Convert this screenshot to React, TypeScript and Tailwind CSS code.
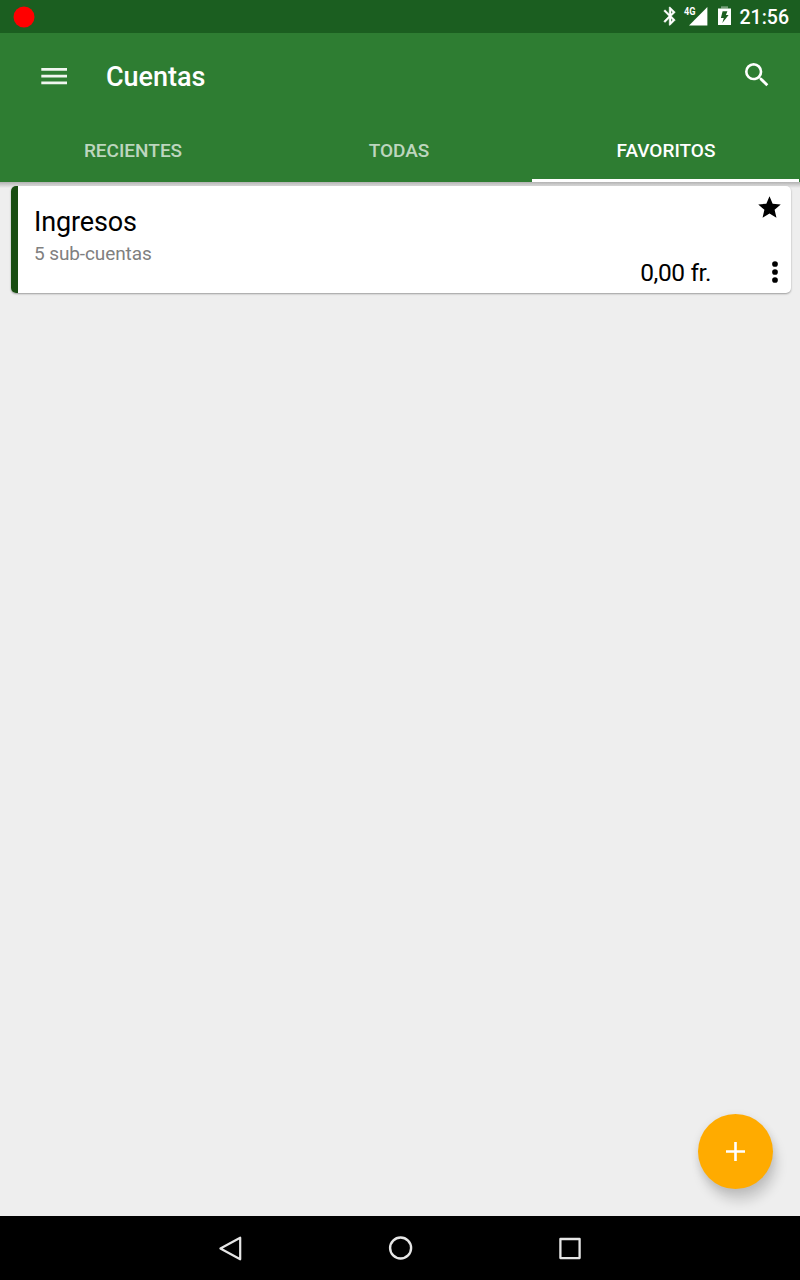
import React from 'react';

function StatusBar() {
  return (
    <div className="flex h-[33px] items-center bg-[#1b5e20] pl-[13px] pr-[11px] text-white">
      <svg className="h-[22px] w-[22px]" viewBox="0 0 22 22" aria-hidden="true">
        <circle cx="11" cy="11" r="10.5" fill="#ff0000" />
      </svg>
      <svg className="ml-auto h-[33px] w-[74px]" viewBox="660 0 74 33" fill="currentColor" aria-hidden="true">
        <path
          transform="translate(659.2 5.2) scale(0.91)"
          d="M17.71 7.71L12 2h-1v7.59L6.41 5 5 6.41 10.59 12 5 17.59 6.41 19 11 14.41V22h1l5.71-5.71-4.3-4.29 4.3-4.29zM13 5.83l1.88 1.88L13 9.59V5.83zm1.88 10.46L13 18.17v-3.76l1.88 1.88z"
          stroke="currentColor"
          strokeWidth="0.5"
        />
        <text x="684" y="15" fontFamily="Roboto, sans-serif" fontSize="10.5" fontWeight="700" textLength="11.5" lengthAdjust="spacingAndGlyphs">
          4G
        </text>
        <path d="M707.4 7v18.5H689z" />
        <path d="M721 6.3h7v2.2h-7z" opacity="0.4" />
        <path fillRule="evenodd" d="M718 8.5h13v16.5h-13zM722.6 11.2h4.8l-1.5 3.7h2.7l-6.3 8.2 1.5-5.2h-2.9z" />
      </svg>
      <span className="ml-[6px] pt-[2px] text-[19.5px] font-medium leading-none">21:56</span>
    </div>
  );
}

function Toolbar() {
  return (
    <div className="flex h-[85px] items-center px-[27px] text-white">
      <svg className="ml-[14px] h-[18px] w-[26px]" viewBox="0 0 26 18" fill="currentColor" aria-hidden="true">
        <path d="M0.3 1h26v2.8h-26zM0.3 7.7h26v2.8h-26zM0.3 14.4h26v2.8h-26z" opacity="0.93" />
      </svg>
      <h1 className="ml-[39px] pt-[2px] text-[27px] font-medium leading-8 tracking-[-0.05px]">Cuentas</h1>
      <svg className="mb-[2px] ml-auto h-8 w-8" viewBox="0 0 24 24" fill="currentColor" aria-hidden="true">
        <path d="M15.5 14h-.79l-.28-.27A6.471 6.471 0 0 0 16 9.5 6.5 6.5 0 1 0 9.5 16c1.61 0 3.09-.59 4.23-1.57l.27.28v.79l5 4.99L20.49 19l-4.99-5zm-6 0C7.01 14 5 11.99 5 9.5S7.01 5 9.5 5 14 7.01 14 9.5 11.99 14 9.5 14z" />
      </svg>
    </div>
  );
}

const tabs = [
  { label: 'RECIENTES', active: false },
  { label: 'TODAS', active: false },
  { label: 'FAVORITOS', active: true },
];

function Tabs() {
  return (
    <div className="flex h-16 pr-px">
      {tabs.map((tab) => (
        <button
          key={tab.label}
          className={
            tab.active
              ? 'flex w-[267px] items-center justify-center border-b-[3px] border-white pl-px pt-[6px] text-[19px] font-medium text-white'
              : 'flex w-[266px] items-center justify-center border-b-[3px] border-transparent pt-[6px] text-[19px] font-medium text-white/70'
          }
        >
          {tab.label}
        </button>
      ))}
    </div>
  );
}

function AccountCard() {
  return (
    <div className="relative ml-[11px] mr-[9px] mt-1 flex h-[107px] overflow-hidden rounded-[5px] bg-white shadow-[0_1px_2px_rgba(0,0,0,0.35)]">
      <div className="w-[7px] bg-[#194d12]" />
      <div className="flex flex-1 flex-col pl-4 pt-[20px]">
        <span className="text-[27px] leading-8 tracking-[-0.15px] text-black">Ingresos</span>
        <span className="text-[19px] leading-[31px] tracking-[-0.1px] text-[#808080]">5 sub-cuentas</span>
      </div>
      <span className="self-end pb-[4px] text-[24.5px] leading-8 tracking-[-0.4px] text-black">0,00 fr.</span>
      <div className="flex w-[80px] flex-col items-end justify-between pb-[5px] pt-[8px]">
        <svg className="mr-[8px] h-[27px] w-[27px]" viewBox="0 0 24 24" aria-hidden="true">
          <path d="M12 17.27L18.18 21l-1.64-7.03L22 9.24l-7.19-.61L12 2 9.19 8.63 2 9.24l5.46 4.73L5.82 21z" />
        </svg>
        <svg className="h-8 w-8" viewBox="0 0 24 24" aria-hidden="true">
          <circle cx="12" cy="6" r="2.15" />
          <circle cx="12" cy="12" r="2.15" />
          <circle cx="12" cy="18" r="2.15" />
        </svg>
      </div>
    </div>
  );
}

function NavigationBar() {
  return (
    <div className="flex h-16 items-center justify-center gap-[138px] bg-black">
      <svg className="h-8 w-8" viewBox="0 0 32 32" fill="none" stroke="#e6e6e6" strokeWidth="2.2" strokeLinejoin="round" aria-hidden="true">
        <path d="M26.2 5.7v21.6L6.4 16.5z" />
      </svg>
      <svg className="h-8 w-8" viewBox="0 0 32 32" fill="none" stroke="#e6e6e6" strokeWidth="2.4" aria-hidden="true">
        <circle cx="16.6" cy="16" r="10.5" />
      </svg>
      <svg className="h-8 w-8" viewBox="0 0 32 32" fill="none" stroke="#e6e6e6" strokeWidth="2.3" strokeLinejoin="round" aria-hidden="true">
        <path d="M6.4 7h19.2v19.1H6.4z" />
      </svg>
    </div>
  );
}

export default function App() {
  return (
    <div className="flex h-[1280px] w-[800px] flex-col overflow-hidden bg-[#eeeeee] font-['Roboto',sans-serif]">
      <StatusBar />
      <header className="bg-[#2e7d32]">
        <Toolbar />
        <Tabs />
      </header>
      <main className="relative flex-1 overflow-hidden">
        <div className="absolute inset-x-0 top-0 h-[6px] bg-gradient-to-b from-black/25 to-transparent" />
        <AccountCard />
        <button
          aria-label="+"
          className="absolute bottom-[27px] right-[27px] flex h-[75px] w-[75px] items-center justify-center rounded-full bg-[#ffab00] shadow-[4px_12px_12px_rgba(0,0,0,0.15),0_2px_9px_rgba(0,0,0,0.1)]"
        >
          <svg className="h-[19px] w-[19px]" viewBox="0 0 19 19" aria-hidden="true">
            <path d="M8.2 0h2.6v8.2H19v2.6h-8.2V19H8.2v-8.2H0V8.2h8.2z" fill="#fff" />
          </svg>
        </button>
      </main>
      <NavigationBar />
    </div>
  );
}
